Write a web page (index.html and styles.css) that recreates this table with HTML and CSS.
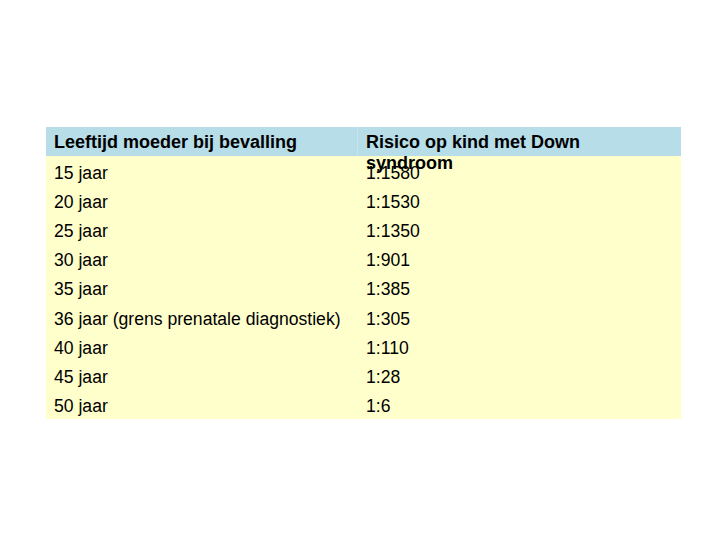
FILE: index.html
```html
<!DOCTYPE html>
<html>
<head>
<meta charset="utf-8">
<link rel="stylesheet" href="styles.css">
</head>
<body>
<div class="table">
  <div class="row head">
    <div class="cell c1">Leeftijd moeder bij bevalling</div>
    <div class="cell c2">Risico op kind met Down syndroom</div>
  </div>
  <div class="row"><div class="cell c1">15 jaar</div><div class="cell c2">1:1580</div></div>
  <div class="row"><div class="cell c1">20 jaar</div><div class="cell c2">1:1530</div></div>
  <div class="row"><div class="cell c1">25 jaar</div><div class="cell c2">1:1350</div></div>
  <div class="row"><div class="cell c1">30 jaar</div><div class="cell c2">1:901</div></div>
  <div class="row"><div class="cell c1">35 jaar</div><div class="cell c2">1:385</div></div>
  <div class="row"><div class="cell c1">36 jaar (grens prenatale diagnostiek)</div><div class="cell c2">1:305</div></div>
  <div class="row"><div class="cell c1">40 jaar</div><div class="cell c2">1:110</div></div>
  <div class="row"><div class="cell c1">45 jaar</div><div class="cell c2">1:28</div></div>
  <div class="row"><div class="cell c1">50 jaar</div><div class="cell c2">1:6</div></div>
</div>
</body>
</html>
```
FILE: styles.css
```css
html, body {
  margin: 0;
  padding: 0;
  background: #ffffff;
}
body {
  padding: 127px 0 0 46px;
  font-family: "Liberation Sans", Arial, sans-serif;
  color: #000000;
}
.table {
  width: 635px;
  display: flex;
  flex-direction: column;
  background: #ffffcc;
}
.row {
  display: grid;
  grid-template-columns: 311px 324px;
  height: 29.22px;
  font-size: 17.6px;
  line-height: 20px;
}
.cell {
  padding: 6.6px 0 0 8px;
  white-space: nowrap;
}
.c2 {
  padding-left: 9px;
}
.head {
  height: 29px;
  background: #b7dde8;
  font-weight: bold;
  font-size: 18px;
  line-height: 21px;
  position: relative;
  z-index: 1;
}
.head .cell {
  box-sizing: border-box;
  height: 29px;
  padding-top: 5px;
  white-space: normal;
  overflow: visible;
}
.head .c2 {
  padding-left: 8px;
  padding-right: 80px;
  border-left: 1px solid #c6e4ec;
}
```
